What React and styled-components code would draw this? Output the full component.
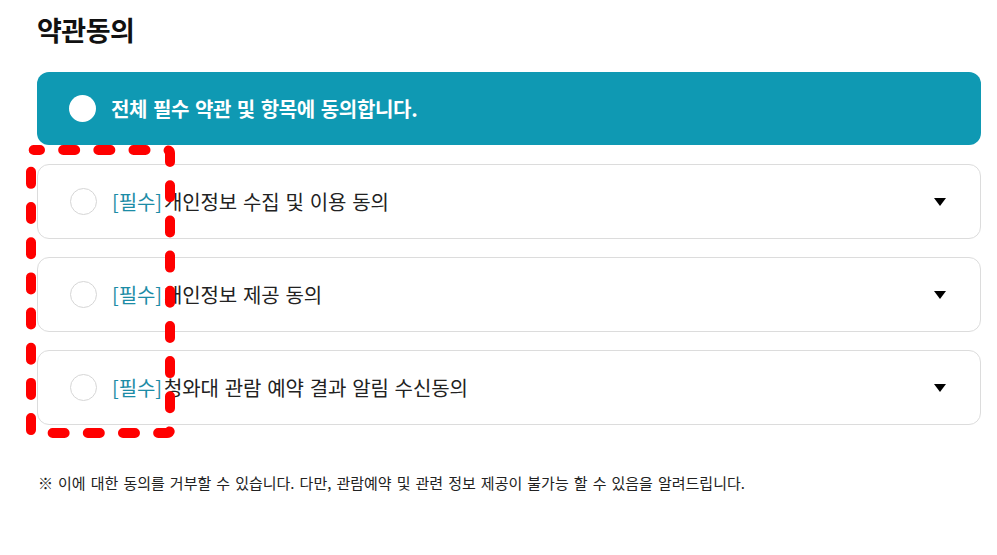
import React from 'react';
import styled, { createGlobalStyle } from 'styled-components';

const GlobalStyle = createGlobalStyle`
    html, body {
        margin: 0;
        padding: 0;
        background: #fff;
    }
    body {
        font-family: "Noto Sans CJK KR", "Noto Sans", sans-serif;
        color: #222;
    }
`;

const Page = styled.div`
    position: relative;
    width: 997px;
    height: 555px;
    box-sizing: border-box;
    padding: 10px 16px 0 37px;
`;

const Title = styled.h2`
    margin: 0 0 22px 0;
    font-size: 27px;
    font-weight: 700;
    line-height: 40px;
    color: #111;
    letter-spacing: -0.5px;
`;

const List = styled.div`
    display: flex;
    flex-direction: column;
    gap: 18px;
`;

const Row = styled.div`
    display: flex;
    align-items: center;
    box-sizing: border-box;
    height: ${props => props.$all ? 73 : 75}px;
    padding: 0 34px 0 32px;
    border-radius: 12px;
    background: ${props => props.$all ? '#0f99b3' : '#fff'};
    border: ${props => props.$all ? 'none' : '1px solid #dcdcdc'};
    margin-bottom: ${props => props.$all ? '1px' : '0'};
`;

const Circle = styled.span`
    flex: none;
    width: 27px;
    height: 27px;
    box-sizing: border-box;
    border-radius: 50%;
    background: #fff;
    border: ${props => props.$filled ? 'none' : '1.5px solid #d6d6d6'};
    margin-right: 15px;
`;

const Label = styled.span`
    flex: 1;
    font-size: 20px;
    font-weight: ${props => props.$all ? 700 : 400};
    color: ${props => props.$all ? '#fff' : '#222'};
    letter-spacing: ${props => props.$all ? '-0.3px' : '-0.1px'};
    word-spacing: 1.5px;
`;

const Tag = styled.span`
    color: #1c8ca6;
    margin-right: 2px;
`;

const Arrow = styled.span`
    flex: none;
    width: 0;
    height: 0;
    border-left: 6.5px solid transparent;
    border-right: 6.5px solid transparent;
    border-top: 8px solid #000;
`;

const Note = styled.p`
    margin: 47px 0 0 1px;
    font-size: 15px;
    color: #222;
    word-spacing: 1.7px;
`;

const Overlay = styled.svg`
    position: absolute;
    left: 0;
    top: 0;
    pointer-events: none;
`;

const terms = [
    '개인정보 수집 및 이용 동의',
    '개인정보 제공 동의',
    '청와대 관람 예약 결과 알림 수신동의'
];

export default function App() {
    return (
        <Page>
            <GlobalStyle />
            <Title>약관동의</Title>
            <List>
                <Row $all>
                    <Circle $filled />
                    <Label $all>전체 필수 약관 및 항목에 동의합니다.</Label>
                </Row>
                {terms.map((t, i) => (
                    <Row key={`term-${i}`}>
                        <Circle />
                        <Label><Tag>[필수]</Tag>{t}</Label>
                        <Arrow />
                    </Row>
                ))}
            </List>
            <Note>※ 이에 대한 동의를 거부할 수 있습니다. 다만, 관람예약 및 관련 정보 제공이 불가능 할 수 있음을 알려드립니다.</Note>
            <Overlay width="997" height="555">
                <rect
                    x="31" y="150" width="139" height="283" rx="3"
                    fill="none" stroke="#ff0000" strokeWidth="10"
                    strokeLinecap="round" strokeDasharray="12 23.17"
                    strokeDashoffset="6"
                />
            </Overlay>
        </Page>
    );
}
